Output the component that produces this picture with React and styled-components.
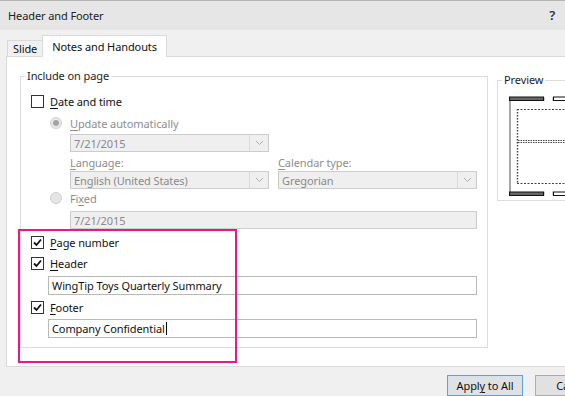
import { createGlobalStyle, styled } from 'styled-components'

const GlobalStyle = createGlobalStyle`
  html, body {
    margin: 0;
    padding: 0;
    background: #f0f0f0;
  }
  body {
    font-family: "Noto Sans", "Open Sans", sans-serif;
    font-size: 11px;
    letter-spacing: -0.1px;
    color: #1e1e1e;
  }
`

const Viewport = styled.div`
  position: relative;
  width: 565px;
  height: 396px;
  overflow: hidden;
`

const Dialog = styled.div`
  width: 620px;
  height: 396px;
  background: #f0f0f0;
  display: flex;
  flex-direction: column;
`

const TitleBar = styled.div`
  height: 29px;
  border-top: 1px solid #b4b4b4;
  background: #e6e6e6;
  display: flex;
  align-items: center;
  padding: 0 14px 0 8px;
  font-size: 11px;
  color: #222;
`

const TitleControls = styled.div`
  margin-left: auto;
  display: flex;
  gap: 40px;
  font-size: 13px;
  font-weight: 600;
  color: #333;
`

const TabStrip = styled.div`
  height: 27px;
  display: flex;
  align-items: flex-end;
  padding-left: 7px;
`

const Tab = styled.div`
  height: ${p => (p.$active ? '21px' : '15px')};
  padding: 0 ${p => (p.$active ? '9px' : '5px')};
  margin-left: ${p => (p.$active ? '-1px' : '0')};
  margin-bottom: ${p => (p.$active ? '-1px' : '0')};
  background: ${p => (p.$active ? '#fff' : '#f0f0f0')};
  border: 1px solid #d9d9d9;
  border-bottom: none;
  display: flex;
  align-items: center;
  font-size: 11px;
  color: #111;
  position: relative;
  z-index: 1;
`

const Panel = styled.div`
  margin-left: 6px;
  width: 606px;
  height: 303px;
  background: #fff;
  border: 1px solid #d9d9d9;
  padding: 11px 0 0 13px;
  display: flex;
  align-items: flex-start;
  gap: 9px;
`

const Group = styled.fieldset`
  margin: ${p => p.$top || 0}px 0 0 0;
  width: ${p => p.$width}px;
  box-sizing: border-box;
  padding: 0 10px ${p => p.$pb ?? 9}px 10px;
  border: 1px solid #dcdcdc;
  display: flex;
  flex-direction: column;
`

const Legend = styled.legend`
  margin-left: -6px;
  padding: 0 2px;
  line-height: 16px;
  font-size: 11px;
  color: #1e1e1e;
`

const CheckRow = styled.label`
  display: flex;
  align-items: center;
  gap: 6px;
  height: 20px;
  margin-top: ${p => p.$mt || 0}px;
  color: #111;
`

const Box = styled.span`
  width: 13px;
  height: 13px;
  box-sizing: border-box;
  border: 1px solid #333;
  background: #fff;
  display: flex;
  align-items: center;
  justify-content: center;
`

const RadioRow = styled.div`
  display: flex;
  align-items: center;
  gap: 8px;
  height: 16px;
  padding-left: 19px;
  margin-top: ${p => p.$mt || 0}px;
  color: #8d8d8d;
`

const Radio = styled.span`
  width: 12px;
  height: 12px;
  box-sizing: border-box;
  border-radius: 50%;
  border: 1px solid #cfcfcf;
  background: ${p => (p.$checked ? '#e8e8e8' : '#e4e4e4')};
  display: flex;
  align-items: center;
  justify-content: center;
  &::after {
    content: '';
    display: ${p => (p.$checked ? 'block' : 'none')};
    width: 6px;
    height: 6px;
    border-radius: 50%;
    background: #a4a4a4;
  }
`

const Indent = styled.div`
  margin-left: ${p => p.$left}px;
  margin-top: ${p => p.$mt || 0}px;
`

const TwoCol = styled.div`
  display: grid;
  grid-template-columns: 1fr 1fr;
  column-gap: 9px;
  height: ${p => p.$h}px;
  box-sizing: border-box;
  padding-top: ${p => p.$pt || 0}px;
  align-items: center;
  color: #8d8d8d;
`

const Combo = styled.div`
  width: ${p => (p.$width ? `${p.$width}px` : 'auto')};
  height: 18px;
  box-sizing: border-box;
  border: 1px solid #cccccc;
  background: #efefef;
  color: #8a8a8a;
  display: flex;
  align-items: center;
`

const ComboValue = styled.span`
  flex: 1;
  padding-left: 3px;
`

const ComboArrow = styled.span`
  width: 18px;
  height: 100%;
  border-left: 1px solid #dadada;
  display: flex;
  align-items: center;
  justify-content: center;
`

const TextBox = styled.div`
  height: ${p => (p.$disabled ? 18 : 19)}px;
  box-sizing: border-box;
  border: 1px solid ${p => (p.$disabled ? '#cccccc' : '#b9b9b9')};
  background: ${p => (p.$disabled ? '#efefef' : '#fff')};
  color: ${p => (p.$disabled ? '#8a8a8a' : '#111')};
  padding: 0 3px;
  display: flex;
  align-items: center;
`

const Caret = styled.span`
  display: inline-block;
  width: 1px;
  height: 13px;
  background: #000;
  margin-left: 1px;
`

const U = styled.span`
  text-decoration: underline;
  text-underline-offset: 2px;
`

const PreviewArt = styled.svg`
  display: block;
  flex-shrink: 0;
  margin: 8px 0 0 1px;
`

const ButtonRow = styled.div`
  display: flex;
  justify-content: flex-end;
  gap: 12px;
  padding: 8px 9px 0 0;
`

const Button = styled.button`
  width: 76px;
  height: 21px;
  box-sizing: border-box;
  background: #e1e1e1;
  border: 1px solid ${p => (p.$primary ? '#5fa0e0' : '#adadad')};
  box-shadow: ${p => (p.$primary ? 'inset 0 0 0 1px #cfe3f7' : 'none')};
  font-family: inherit;
  font-size: 11px;
  letter-spacing: -0.1px;
  color: #111;
  padding: 0;
`

const Highlight = styled.div`
  position: absolute;
  left: 18px;
  top: 229px;
  width: 219px;
  height: 134px;
  box-sizing: border-box;
  border: 2px solid #ec168b;
  pointer-events: none;
`

const Check = () => (
  <svg width="11" height="11" viewBox="0 0 11 11">
    <path d="M2 5.5 L4.5 8 L9 2.5" fill="none" stroke="#111" strokeWidth="1.8" />
  </svg>
)

const Chevron = () => (
  <svg width="9" height="6" viewBox="0 0 9 6">
    <path d="M1 1 L4.5 4.5 L8 1" fill="none" stroke="#b0b0b0" strokeWidth="1" />
  </svg>
)

const Preview = () => (
  <PreviewArt width="95" height="101" viewBox="0 0 95 101">
    <rect x="0" y="3" width="2" height="94" fill="#a8a8a8" />
    <rect x="0.5" y="1" width="34" height="3.5" fill="#666" stroke="#111" />
    <rect x="44.5" y="1" width="48" height="3.5" fill="#fff" stroke="#111" />
    <line x1="35.5" y1="1" x2="35.5" y2="5" stroke="#ccc" />
    <line x1="43.5" y1="1" x2="43.5" y2="5" stroke="#ccc" />
    <rect x="0.5" y="96" width="34" height="3.5" fill="#666" stroke="#111" />
    <rect x="44.5" y="96" width="48" height="3.5" fill="#fff" stroke="#111" />
    <line x1="35.5" y1="95.5" x2="35.5" y2="99.5" stroke="#ccc" />
    <line x1="43.5" y1="95.5" x2="43.5" y2="99.5" stroke="#ccc" />
    <line x1="8" y1="13.5" x2="95" y2="13.5" stroke="#444" strokeDasharray="2 1.5" />
    <line x1="8" y1="87.5" x2="95" y2="87.5" stroke="#444" strokeDasharray="2 1.5" />
    <line x1="8.5" y1="13" x2="8.5" y2="88" stroke="#444" strokeWidth="1.5" strokeDasharray="1.5 1.5" />
    <line x1="9" y1="44.5" x2="95" y2="44.5" stroke="#444" strokeDasharray="1.5 1" />
    <line x1="9" y1="46.5" x2="95" y2="46.5" stroke="#444" strokeDasharray="1.5 1" />
  </PreviewArt>
)

export default function App() {
  return (
    <Viewport>
      <GlobalStyle />
      <Dialog>
        <TitleBar>
          Header and Footer
          <TitleControls>
            <span>?</span>
            <span>✕</span>
          </TitleControls>
        </TitleBar>
        <TabStrip>
          <Tab>Slide</Tab>
          <Tab $active>Notes and Handouts</Tab>
        </TabStrip>
        <Panel>
          <Group $width={468}>
            <Legend>Include on page</Legend>
            <CheckRow $mt={7}>
              <Box />
              <span><U>D</U>ate and time</span>
            </CheckRow>
            <RadioRow $mt={4}>
              <Radio $checked />
              <span><U>U</U>pdate automatically</span>
            </RadioRow>
            <Indent $left={39} $mt={3}>
              <Combo $width={199}>
                <ComboValue>7/21/2015</ComboValue>
                <ComboArrow><Chevron /></ComboArrow>
              </Combo>
              <TwoCol $h={19} $pt={1}>
                <span><U>L</U>anguage:</span>
                <span><U>C</U>alendar type:</span>
              </TwoCol>
              <TwoCol $h={18}>
                <Combo>
                  <ComboValue>English (United States)</ComboValue>
                  <ComboArrow><Chevron /></ComboArrow>
                </Combo>
                <Combo>
                  <ComboValue>Gregorian</ComboValue>
                  <ComboArrow><Chevron /></ComboArrow>
                </Combo>
              </TwoCol>
            </Indent>
            <RadioRow $mt={1}>
              <Radio />
              <span>Fi<U>x</U>ed</span>
            </RadioRow>
            <Indent $left={39} $mt={5}>
              <TextBox $disabled>7/21/2015</TextBox>
            </Indent>
            <CheckRow $mt={3}>
              <Box><Check /></Box>
              <span><U>P</U>age number</span>
            </CheckRow>
            <CheckRow $mt={1}>
              <Box><Check /></Box>
              <span><U>H</U>eader</span>
            </CheckRow>
            <Indent $left={17} $mt={3}>
              <TextBox>WingTip Toys Quarterly Summary</TextBox>
            </Indent>
            <CheckRow $mt={2}>
              <Box><Check /></Box>
              <span><U>F</U>ooter</span>
            </CheckRow>
            <Indent $left={17} $mt={2}>
              <TextBox>Company Confidential<Caret /></TextBox>
            </Indent>
          </Group>
          <Group $width={106} $top={4} $pb={3}>
            <Legend>Preview</Legend>
            <Preview />
          </Group>
        </Panel>
        <ButtonRow>
          <Button $primary>Appl<U>y</U> to All</Button>
          <Button>Cancel</Button>
        </ButtonRow>
      </Dialog>
      <Highlight />
    </Viewport>
  )
}
